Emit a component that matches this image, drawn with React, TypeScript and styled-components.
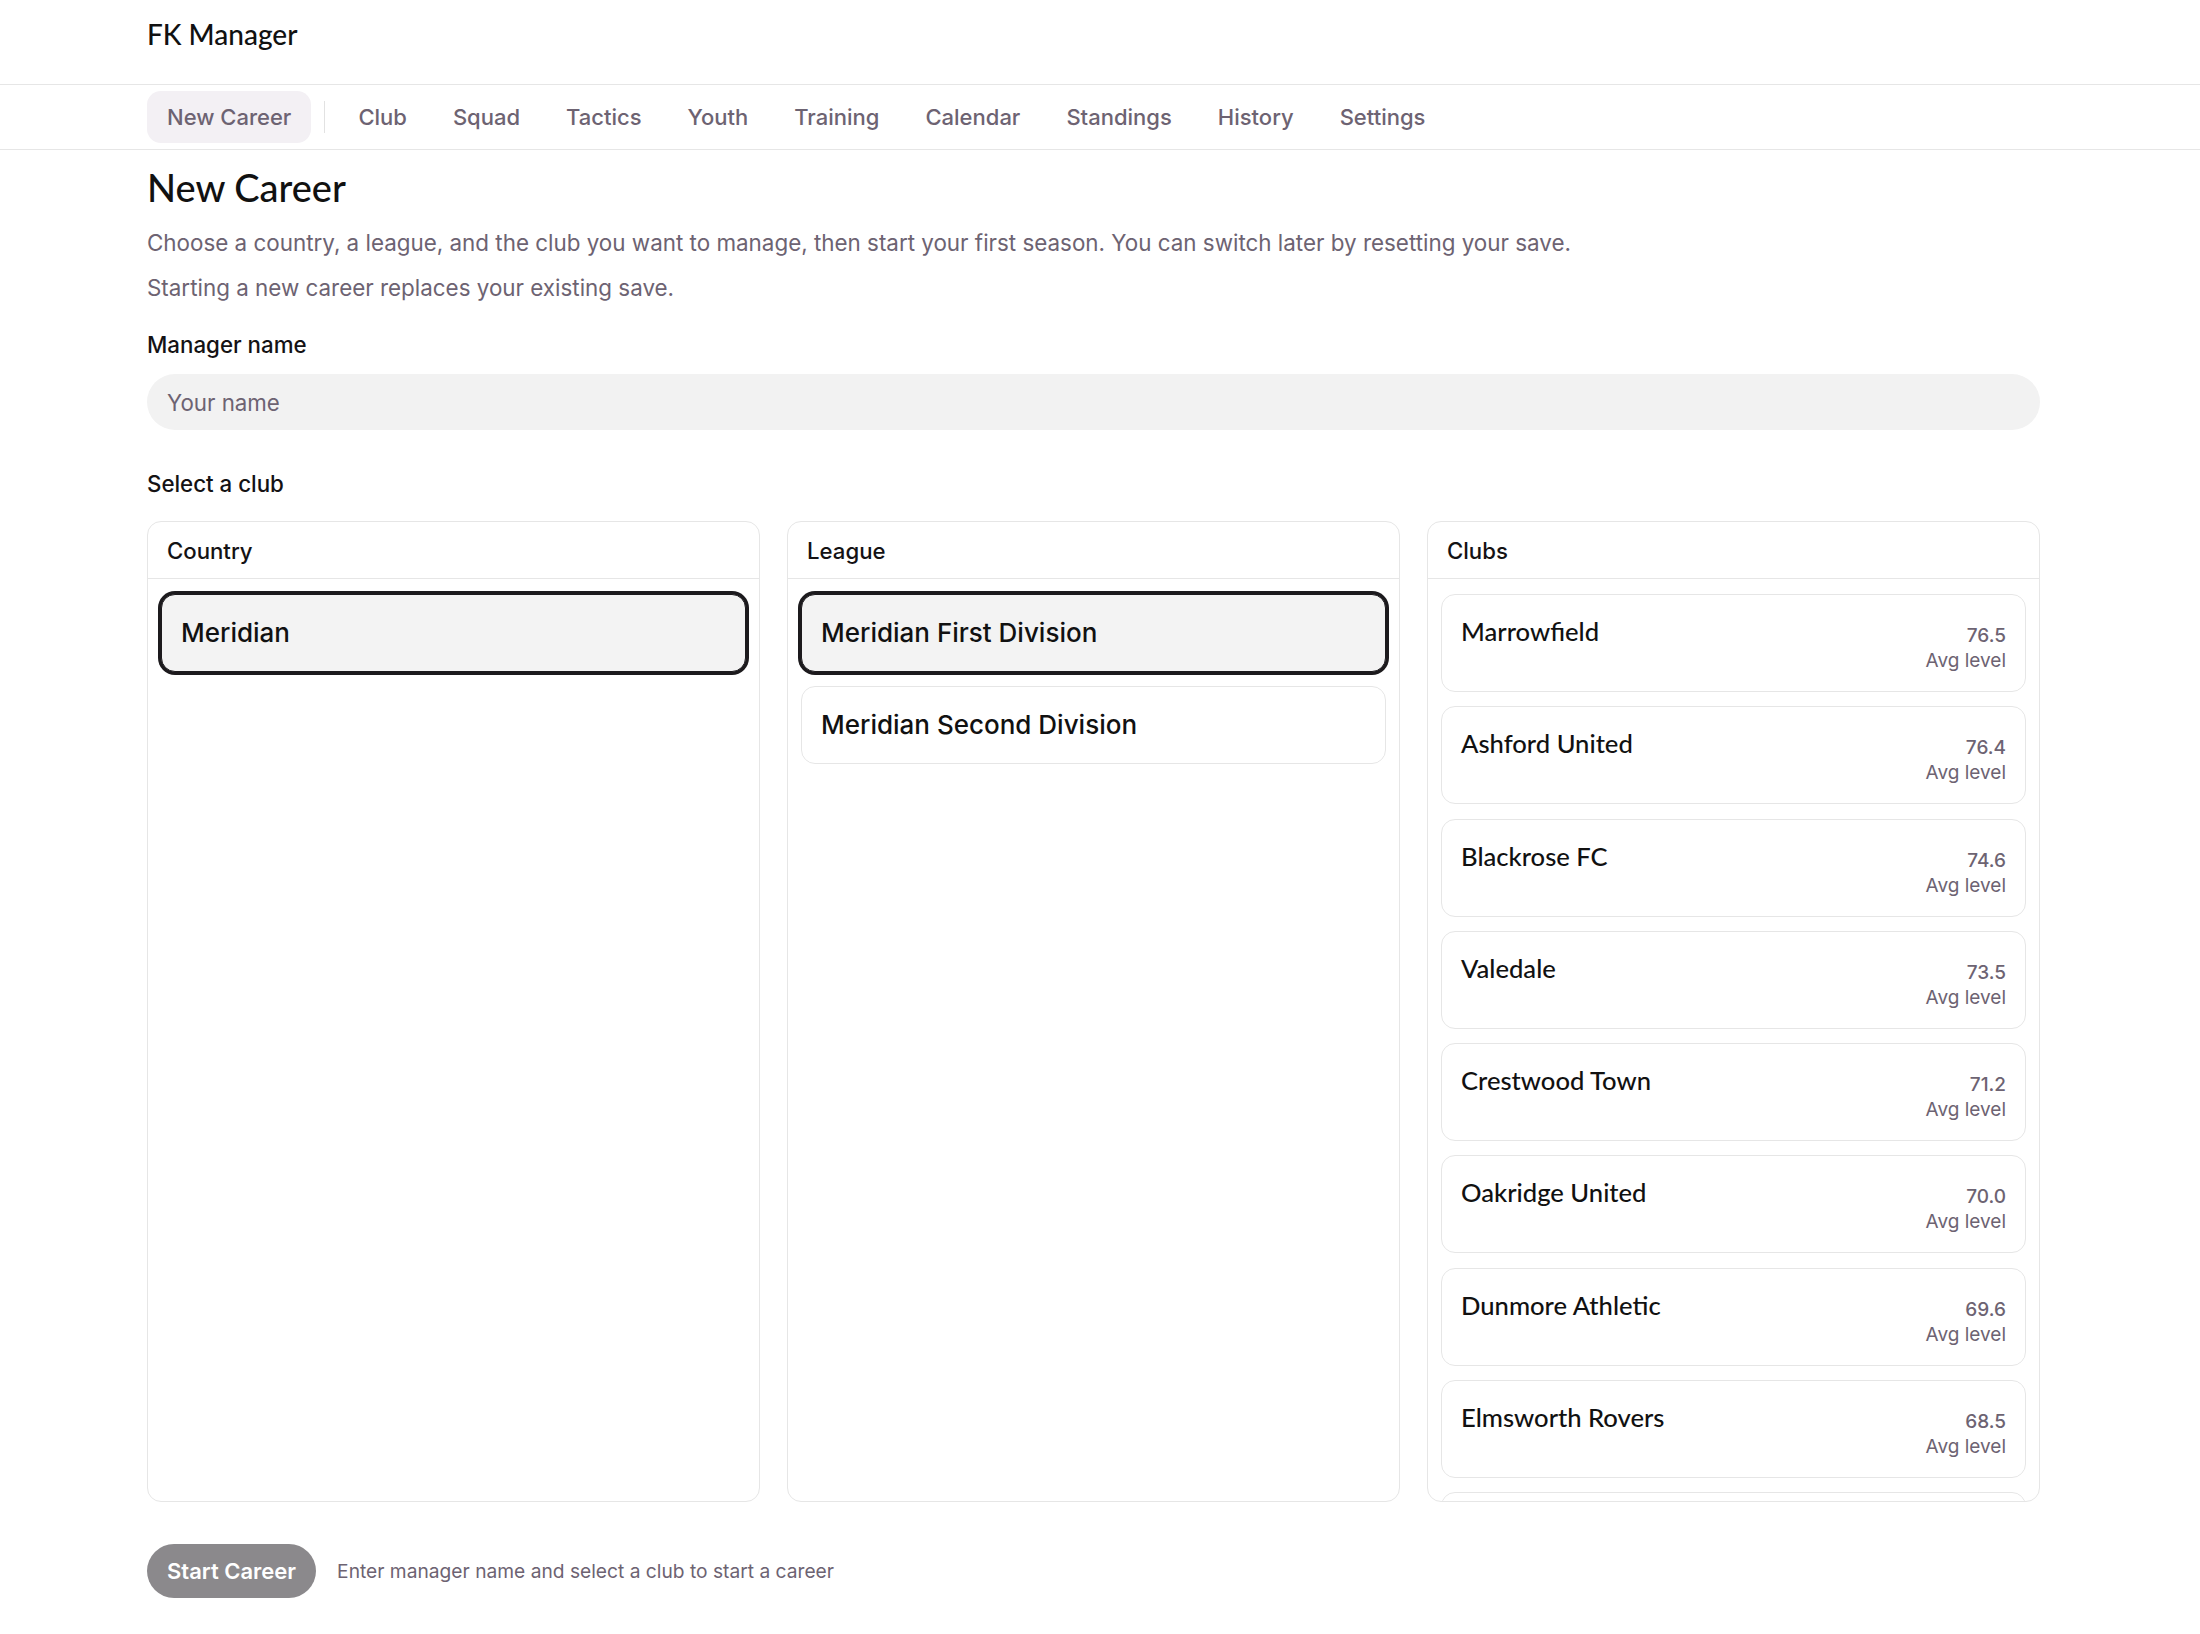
import { useState } from "react";
import styled, { createGlobalStyle } from "styled-components";

const GlobalStyle = createGlobalStyle`
  body {
    margin: 0;
    font-family: Inter, "Noto Sans", sans-serif;
    color: #141214;
    background: #fff;
  }
  * {
    box-sizing: border-box;
  }
`;

const muted = "#6d6372";

const TopBar = styled.header`
  height: 85px;
  display: flex;
  align-items: flex-start;
  padding: 17px 0 0 147px;
  border-bottom: 1px solid #e6e6e6;
`;

const Brand = styled.div`
  font-family: Lato, "Noto Sans", sans-serif;
  font-size: 28px;
  font-weight: 500;
  line-height: 34px;
  color: #111;
`;

const Nav = styled.nav`
  height: 65px;
  display: flex;
  align-items: center;
  gap: 6px;
  padding-left: 147px;
  border-bottom: 1px solid #e6e6e6;
`;

const Tab = styled.button<{ active?: boolean }>`
  height: 52px;
  padding: 0 20px;
  border: none;
  border-radius: 14px;
  background: ${(p) => (p.active ? "#f3f0f4" : "transparent")};
  color: ${muted};
  font-family: Inter, sans-serif;
  font-size: 22px;
  font-weight: 500;
  cursor: pointer;
`;

const NavDivider = styled.span`
  width: 1px;
  height: 32px;
  background: #e2e2e2;
  margin: 0 7px;
`;

const Main = styled.main`
  width: 1893px;
  margin-left: 147px;
  padding-top: 16px;
`;

const Title = styled.h1`
  margin: 0;
  font-family: Lato, "Noto Sans", sans-serif;
  font-size: 38px;
  font-weight: 500;
  line-height: 43px;
  color: #111;
`;

const Intro = styled.p`
  margin: 0;
  font-size: 22.4px;
  line-height: 33px;
  color: ${muted};
  & + & {
    margin-top: 12px;
  }
`;

const IntroBlock = styled.div`
  margin-top: 17px;
`;

const FieldLabel = styled.div<{ gap: number }>`
  margin-top: ${(p) => p.gap}px;
  font-size: 22.3px;
  font-weight: 500;
  line-height: 33px;
  color: #141214;
`;

const NameInput = styled.input`
  display: block;
  width: 100%;
  height: 56px;
  margin-top: 13px;
  padding: 0 20px;
  border: none;
  border-radius: 28px;
  background: #f2f2f2;
  font-family: Inter, sans-serif;
  font-size: 22.3px;
  color: #141214;
  outline: none;
  &::placeholder {
    color: ${muted};
  }
`;

const Columns = styled.div`
  display: grid;
  grid-template-columns: repeat(3, 1fr);
  gap: 27px;
  height: 981px;
  margin-top: 21px;
`;

const Panel = styled.section`
  display: flex;
  flex-direction: column;
  min-height: 0;
  border: 1px solid #e6e6e6;
  border-radius: 14px;
  overflow: hidden;
`;

const PanelHeader = styled.div`
  flex: none;
  height: 57px;
  display: flex;
  align-items: center;
  padding: 0 19px;
  border-bottom: 1px solid #e6e6e6;
  font-size: 22.2px;
  font-weight: 500;
`;

const List = styled.div`
  flex: 1;
  min-height: 0;
  display: flex;
  flex-direction: column;
  gap: 14.3px;
  padding: 15px 13px 14px;
  overflow-y: auto;
  scrollbar-width: none;
  &::-webkit-scrollbar {
    display: none;
  }
`;

const OptionCard = styled.button<{ selected?: boolean }>`
  flex: none;
  display: block;
  width: 100%;
  padding: 20px 19px;
  text-align: left;
  border: 1px solid ${(p) => (p.selected ? "#1c1a1d" : "#e6e6e6")};
  box-shadow: ${(p) => (p.selected ? "0 0 0 3px #1c1a1d" : "none")};
  border-radius: 14px;
  background: ${(p) => (p.selected ? "#f3f3f3" : "#fff")};
  font-family: Inter, sans-serif;
  font-size: 26px;
  font-weight: 500;
  line-height: 36px;
  color: #111;
  cursor: pointer;
`;

const ClubCard = styled.button`
  flex: none;
  display: flex;
  justify-content: space-between;
  align-items: flex-start;
  width: 100%;
  padding: 20px 19px 18px;
  border: 1px solid #e6e6e6;
  border-radius: 14px;
  background: #fff;
  text-align: left;
  cursor: pointer;
`;

const ClubName = styled.span`
  font-family: Lato, "Noto Sans", sans-serif;
  font-size: 25.6px;
  font-weight: 500;
  line-height: 32px;
  color: #111;
`;

const ClubStats = styled.span`
  display: flex;
  flex-direction: column;
  align-items: flex-end;
  margin-top: 8px;
  font-family: Inter, sans-serif;
  font-size: 19px;
  line-height: 25px;
  color: ${muted};
`;

const StatValue = styled.span`
  font-weight: 500;
`;

const Footer = styled.div`
  display: flex;
  align-items: center;
  gap: 21px;
  margin-top: 42px;
  padding-bottom: 37px;
`;

const StartButton = styled.button`
  height: 54px;
  padding: 0 20px;
  border: none;
  border-radius: 27px;
  background: #8b898c;
  color: #fff;
  font-family: Inter, sans-serif;
  font-size: 22px;
  font-weight: 600;
  cursor: not-allowed;
`;

const Hint = styled.span`
  font-size: 19.2px;
  color: ${muted};
`;

const tabs = [
  "Club",
  "Squad",
  "Tactics",
  "Youth",
  "Training",
  "Calendar",
  "Standings",
  "History",
  "Settings",
];

const leagues = ["Meridian First Division", "Meridian Second Division"];

const clubs = [
  { name: "Marrowfield", level: "76.5" },
  { name: "Ashford United", level: "76.4" },
  { name: "Blackrose FC", level: "74.6" },
  { name: "Valedale", level: "73.5" },
  { name: "Crestwood Town", level: "71.2" },
  { name: "Oakridge United", level: "70.0" },
  { name: "Dunmore Athletic", level: "69.6" },
  { name: "Elmsworth Rovers", level: "68.5" },
  { name: "Harrowgate", level: "67.9" },
  { name: "Stonebridge", level: "66.8" },
];

export default function App() {
  const [league, setLeague] = useState(leagues[0]);
  const [name, setName] = useState("");

  return (
    <>
      <GlobalStyle />
      <TopBar>
        <Brand>FK Manager</Brand>
      </TopBar>
      <Nav>
        <Tab active>New Career</Tab>
        <NavDivider />
        {tabs.map((t) => (
          <Tab key={t}>{t}</Tab>
        ))}
      </Nav>
      <Main>
        <Title>New Career</Title>
        <IntroBlock>
          <Intro>
            Choose a country, a league, and the club you want to manage, then
            start your first season. You can switch later by resetting your
            save.
          </Intro>
          <Intro>Starting a new career replaces your existing save.</Intro>
        </IntroBlock>
        <FieldLabel gap={24}>Manager name</FieldLabel>
        <NameInput
          placeholder="Your name"
          value={name}
          onChange={(e) => setName(e.target.value)}
        />
        <FieldLabel gap={37}>Select a club</FieldLabel>
        <Columns>
          <Panel>
            <PanelHeader>Country</PanelHeader>
            <List>
              <OptionCard selected>Meridian</OptionCard>
            </List>
          </Panel>
          <Panel>
            <PanelHeader>League</PanelHeader>
            <List>
              {leagues.map((l) => (
                <OptionCard
                  key={l}
                  selected={l === league}
                  onClick={() => setLeague(l)}
                >
                  {l}
                </OptionCard>
              ))}
            </List>
          </Panel>
          <Panel>
            <PanelHeader>Clubs</PanelHeader>
            <List>
              {clubs.map((c) => (
                <ClubCard key={c.name}>
                  <ClubName>{c.name}</ClubName>
                  <ClubStats>
                    <StatValue>{c.level}</StatValue>
                    <span>Avg level</span>
                  </ClubStats>
                </ClubCard>
              ))}
            </List>
          </Panel>
        </Columns>
        <Footer>
          <StartButton disabled>Start Career</StartButton>
          <Hint>Enter manager name and select a club to start a career</Hint>
        </Footer>
      </Main>
    </>
  );
}
